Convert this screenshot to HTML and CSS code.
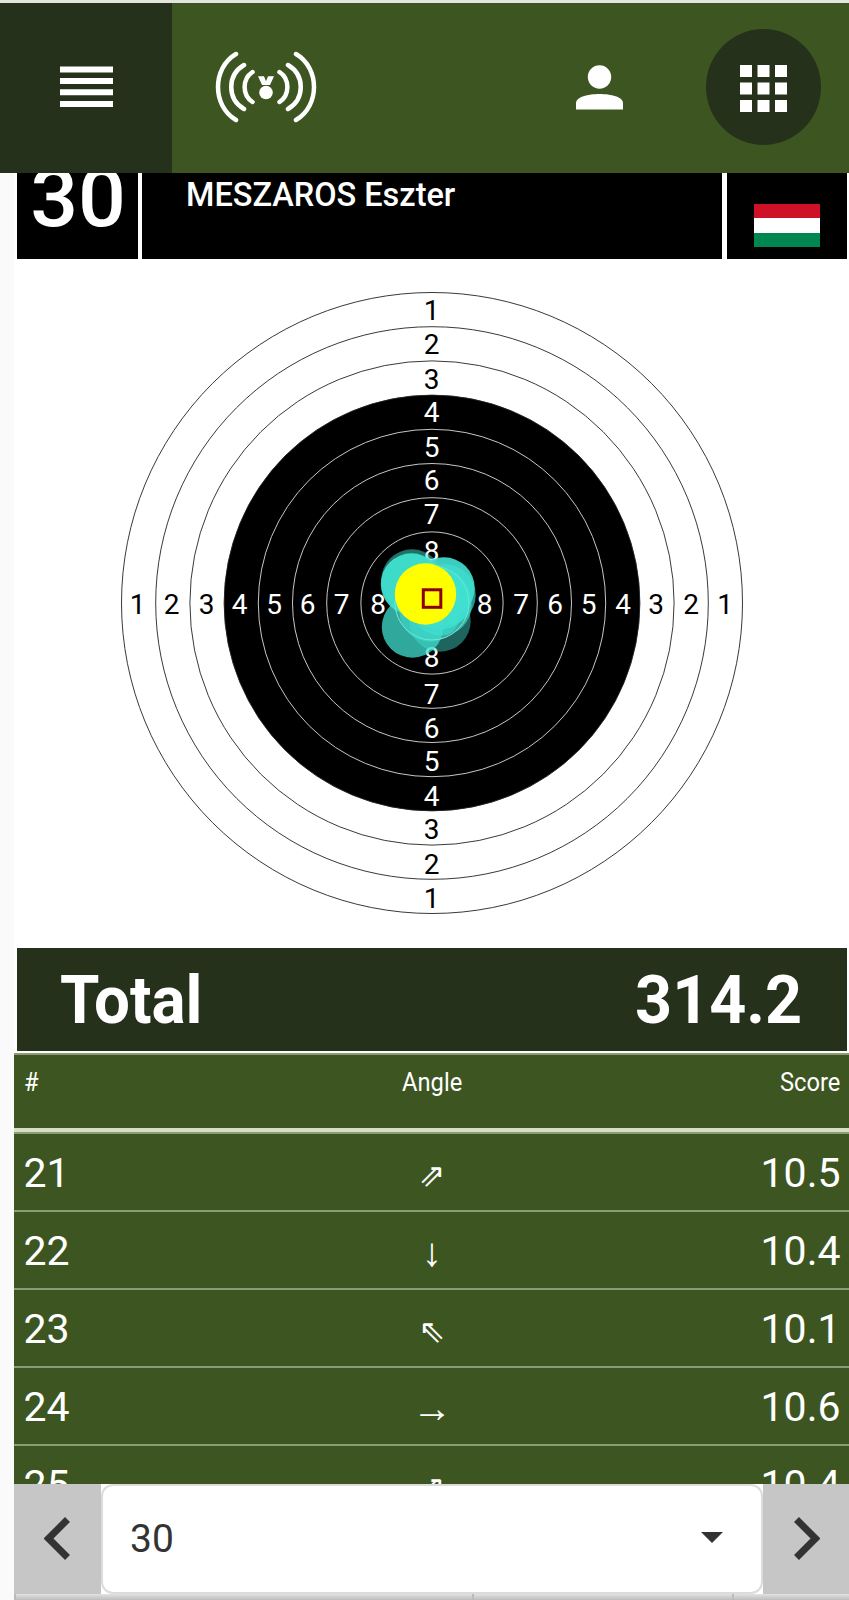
FILE: index.html
```html
<!DOCTYPE html>
<html lang="en">
<head>
    <meta charset="UTF-8">
    <meta name="viewport" content="width=device-width, initial-scale=1.0">
    <title>MESZAROS Eszter</title>
    <link rel="stylesheet" href="styles.css">
</head>
<body>
    <header class="topbar">
        <button class="menu-btn" aria-label="Menu">
            <svg width="54" height="42" viewBox="0 0 54 42" fill="#fff">
                <path d="M1 .5h53v6H1zM1 12h53v6H1zM1 23.300h53v6H1zM1 35h53v6H1z"/>
            </svg>
        </button>
        <svg class="live-icon" width="102" height="72" viewBox="0 0 102 72" fill="none" stroke="#fff" stroke-width="4.5" stroke-linecap="round">
            <path d="M21 3C-3 17-3 55 21 69M29 14C12 24 12 48 29 58M37.500 21C27 28 27 44 37.500 51"/>
            <path d="M81 3C105 17 105 55 81 69M73 14C90 24 90 48 73 58M64.500 21C75 28 75 44 64.500 51"/>
            <g fill="#fff" stroke="none">
                <circle cx="51" cy="41.500" r="6.800"/>
                <path d="M43 25.300h6l2 5 2-5h6l-4 8.700h-8z"/>
            </g>
        </svg>
        <div class="top-actions">
            <svg class="user-icon" width="47" height="45" viewBox="0 0 47 45" fill="#fff">
                <circle cx="23.500" cy="12" r="11.700"/>
                <path d="M0 44.500V38C0 32 12 29 23.500 29S47 32 47 38v6.500z"/>
            </svg>
            <button class="apps-btn" aria-label="Apps">
                <svg width="47" height="47" viewBox="0 0 47 47" fill="#fff">
                    <path d="M0 0h12v12H0zM17.500 0h12v12h-12zM35 0h12v12H35zM0 17.500h12v12H0zM17.500 17.500h12v12h-12zM35 17.500h12v12H35zM0 35h12v12H0zM17.500 35h12v12h-12zM35 35h12v12H35z"/>
                </svg>
            </button>
        </div>
    </header>

    <main class="content">
        <div class="athlete">
            <div class="lane"><span>30</span></div>
            <div class="name"><span>MESZAROS Eszter</span></div>
            <div class="country">
                <div class="flag"><i class="red"></i><i class="white"></i><i class="green"></i></div>
            </div>
        </div>

        <svg class="target" id="target" width="835" height="689" viewBox="14 259 835 689"></svg>

        <div class="total">
            <span class="total-label">Total</span>
            <span class="total-score">314.2</span>
        </div>

        <div class="shots">
            <div class="shot-head"><span>#</span><span class="mid">Angle</span><span class="right">Score</span></div>
            <div class="shot-row"><span>21</span><span class="arrow">⇗</span><span class="right">10.5</span></div>
            <div class="shot-row"><span>22</span><span class="arrow single">↓</span><span class="right">10.4</span></div>
            <div class="shot-row"><span>23</span><span class="arrow">⇖</span><span class="right">10.1</span></div>
            <div class="shot-row"><span>24</span><span class="arrow single">→</span><span class="right">10.6</span></div>
            <div class="shot-row"><span>25</span><span class="arrow">⇗</span><span class="right">10.4</span></div>
        </div>

        <div class="picker">
            <button class="step" aria-label="Previous">
                <svg width="26" height="43" viewBox="0 0 26 43" fill="none" stroke="#333" stroke-width="7"><path d="M23.500 2.500 4.500 21.500l19 19"/></svg>
            </button>
            <div class="select-wrap">
                <div class="select"><span>30</span><i class="caret"></i></div>
            </div>
            <button class="step next" aria-label="Next">
                <svg width="26" height="43" viewBox="0 0 26 43" fill="none" stroke="#333" stroke-width="7"><path d="M2.500 2.500l19 19-19 19"/></svg>
            </button>
        </div>
        <div class="footer-row"><i></i><i></i><i></i></div>
    </main>

    <script>
        const cx = 432, cy = 603, step = 34.2;
        let out = '';

        // Rings 1-9, black from ring 4 inwards
        for (let n = 1; n <= 9; n++) {
            const r = 310.5 - (n - 1) * step;
            const fill = n === 4 ? '#000' : 'none';
            const stroke = n < 5 ? '#222' : '#ddd';
            out += `<circle cx="${cx}" cy="${cy}" r="${r}" fill="${fill}" stroke="${stroke}" stroke-width=".9"/>`;
        }

        // Ring numbers
        const pos = [294, 260, 225, 192, 157.5, 124, 90, 53.5];
        pos.forEach((d, i) => {
            const cls = i < 3 ? 'dark' : 'light';
            const spots = [[-.5, -d + 1], [-.5, d + .5], [-d - .3, 1], [d - 1, 1]];
            spots.forEach(([x, y]) => {
                out += `<text class="${cls}" x="${cx + x}" y="${cy + y + 10}">${i + 1}</text>`;
            });
        });

        // Shots, oldest first
        const shots = [
            [412, 580, .5], [440, 621, .45], [412.5, 627, .75], [430, 611, .55],
            [445, 595, .65], [411.5, 584, .95], [441, 605, .65], [444, 588, .92],
            [440, 599, .8]
        ];
        shots.forEach(([x, y, o]) => {
            out += `<circle cx="${x}" cy="${y}" r="30.7" fill="#40e0d0" fill-opacity="${o}"/>`;
        });
        out += `<circle cx="${cx}" cy="${cy}" r="37" fill="none" stroke="#fff" stroke-opacity=".2"/>`;
        out += '<circle cx="425.500" cy="594" r="30.700" fill="#ff0"/>';
        out += '<rect x="423.300" y="589.800" width="17.500" height="17.500" fill="none" stroke="#8b0000" stroke-width="3"/>';
        document.getElementById('target').innerHTML = out;
    </script>
</body>
</html>
```
FILE: styles.css
```css
* {
    box-sizing: border-box;
}
body {
    margin: 0;
    height: 1600px;
    overflow: hidden;
    background: #fafafa;
    font-family: Roboto, sans-serif;
    color: #fff;
}
button {
    border: none;
    padding: 0;
    cursor: pointer;
}
.topbar {
    height: 173px;
    border-top: 3px solid #e3e6df;
    background: #3d5621;
    display: flex;
    align-items: center;
}
.menu-btn {
    width: 172px;
    height: 170px;
    padding-bottom: 2px;
    background: #26311b;
    display: flex;
    align-items: center;
    justify-content: center;
}
.live-icon {
    margin-left: 43px;
    margin-bottom: 2px;
}
.top-actions {
    margin-left: auto;
    margin-right: 28px;
    margin-bottom: 2px;
    display: flex;
    align-items: center;
    gap: 83px;
}
.apps-btn {
    width: 115px;
    height: 116px;
    border-radius: 50%;
    background: #26311b;
    display: flex;
    align-items: center;
    justify-content: center;
    padding-top: 2px;
}
.content {
    margin-left: 14px;
    height: 1427px;
    background: #fff;
}
.athlete {
    display: grid;
    grid-template-columns: 121px 580px 120px;
    gap: 4.5px;
    height: 86px;
    padding-left: 2.5px;
    overflow: hidden;
}
.athlete > div {
    background: #000;
    height: 86px;
}
.lane {
    display: flex;
    justify-content: center;
    font-size: 81px;
    font-weight: 500;
    line-height: 80px;
}
.lane span {
    margin-top: -14px;
    margin-left: 2px;
    transform: scaleX(1.04);
}
.name {
    padding: 1px 0 0 44px;
    font-size: 34px;
    font-weight: 500;
    line-height: 40px;
}
.name span {
    display: inline-block;
    transform: scaleX(.955);
    transform-origin: 0 50%;
}
.country {
    display: flex;
    justify-content: center;
    padding-top: 31px;
}
.flag {
    width: 66px;
    height: 43px;
    display: flex;
    flex-direction: column;
}
.flag i {
    flex: 1;
}
.red { background: #ce1126; }
.white { background: #fff; }
.green { background: #008751; }
.target {
    display: block;
}
.target text {
    font-size: 28px;
    text-anchor: middle;
}
.target .dark { fill: #000; }
.target .light { fill: #fff; }
.total {
    height: 103px;
    margin: 0 2px 2px 2.5px;
    padding: 1px 45px 0 43px;
    background: #26311b;
    display: flex;
    align-items: center;
    justify-content: space-between;
    font-size: 67px;
    font-weight: 700;
}
.total-label {
    transform: scaleX(.95);
    transform-origin: 0 50%;
}
.total-score {
    transform: scaleX(.965);
    transform-origin: 100% 50%;
}
.shots {
    height: 431px;
    overflow: hidden;
    background: #3d5621;
    border-top: 2px solid #8a9d75;
}
.shot-head,
.shot-row {
    display: grid;
    grid-template-columns: 1fr 1fr 1fr;
    padding: 0 8.5px 0 9.5px;
}
.shot-head {
    height: 77px;
    padding-top: 12px;
    border-bottom: 4px solid #d5dec9;
    font-size: 26px;
    line-height: 31px;
}
.shot-head span {
    transform: scaleX(.91);
    transform-origin: 0 50%;
}
.shot-head .mid {
    transform-origin: 50% 50%;
}
.shot-head .right {
    transform-origin: 100% 50%;
}
.shot-row {
    height: 78.1px;
    border-top: 2.5px solid #8a9d75;
    font-size: 41px;
    line-height: 78px;
}
.mid,
.arrow {
    text-align: center;
}
.right {
    text-align: right;
}
.arrow {
    padding-top: 2px;
    font-family: "DejaVu Sans", sans-serif;
    font-size: 32px;
}
.arrow.single {
    padding-top: 1px;
    font-family: "Liberation Sans", sans-serif;
    font-size: 40px;
}
.picker {
    height: 110px;
    display: flex;
    color: #333;
}
.step {
    width: 87px;
    background: #c6c6c6;
    display: flex;
    align-items: center;
    justify-content: center;
    padding: 0 2px 2px 0;
}
.step.next {
    width: 86px;
    padding: 0 0 2px 2px;
}
.select-wrap {
    flex: 1;
}
.select {
    height: 110px;
    border: 2px solid #dcdcdc;
    border-radius: 12px;
    display: flex;
    align-items: center;
    justify-content: space-between;
    padding: 0 38px 0 27px;
    font-size: 39px;
}
.caret {
    border: 11px solid transparent;
    border-top-color: #333;
    border-bottom: 0;
    margin-bottom: 4px;
}
.footer-row {
    height: 6px;
    display: grid;
    grid-template-columns: 458px 260px 1fr;
    background: linear-gradient(#e2e2e2, #bdbdbd);
}
.footer-row i {
    border-left: 2px solid #bbb;
}
```
